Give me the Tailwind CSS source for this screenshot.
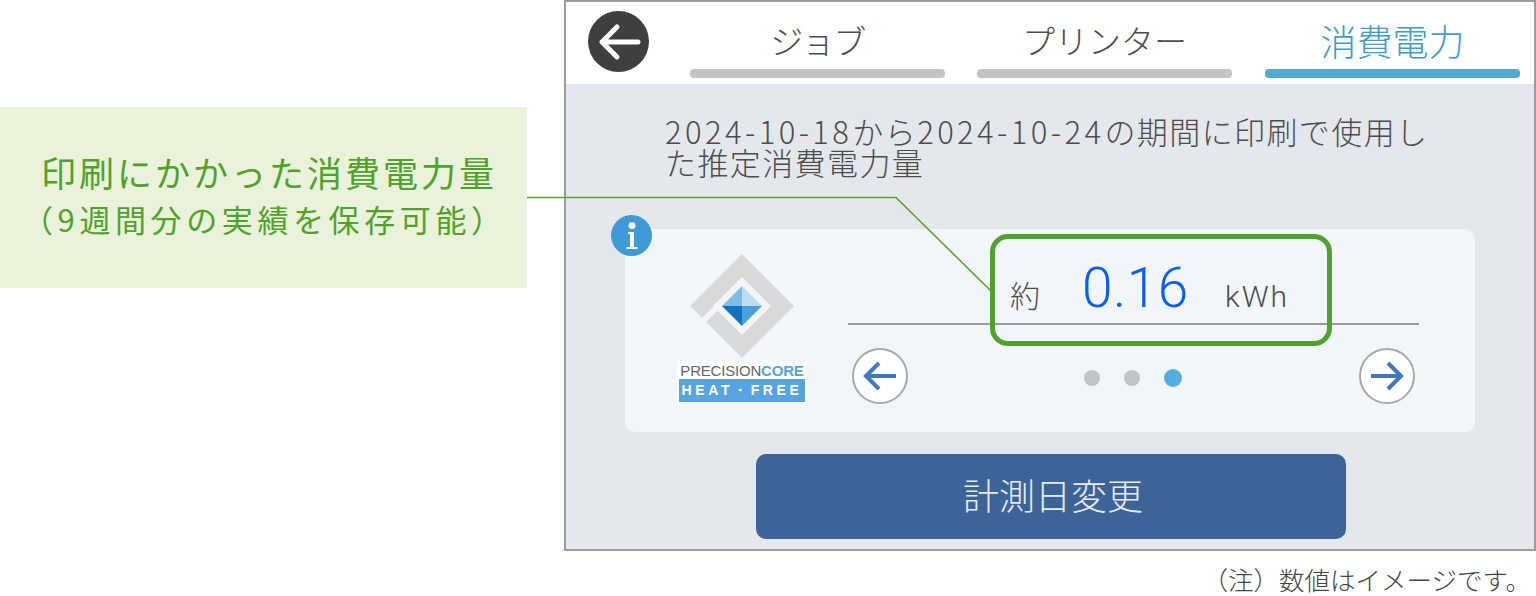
<!DOCTYPE html>
<html lang="ja">
<head>
    <meta charset="UTF-8">
    <title>消費電力</title>
    <script src="https://cdn.jsdelivr.net/npm/@tailwindcss/browser@4"></script>
</head>
<body class="bg-white">

<div class="relative w-[1536px] h-[596px] overflow-hidden flex font-['Noto_Sans_CJK_JP','Noto_Sans',sans-serif]">

    <!-- Callout -->
    <div class="w-[564px] shrink-0 pt-[107px]">
        <div class="w-[527px] h-[181px] bg-[#eaf2dc] pl-[41px] pt-[40px] text-[#4fa32a]">
            <p class="text-[35px] leading-[50px] tracking-[3px] whitespace-nowrap">印刷にかかった消費電力量</p>
            <p class="-ml-[19px] text-[31px] leading-[44px] tracking-[4.6px] whitespace-nowrap">（9週間分の実績を保存可能）</p>
        </div>
    </div>

    <div class="w-[972px] shrink-0">
        <!-- Panel -->
        <div class="w-[972px] h-[551px] border-2 border-[#9c9c9c] flex flex-col">
            <div class="h-[82px] bg-white flex shrink-0">
                <div class="w-[124px] pl-[22px] pt-[9px] shrink-0">
                    <div class="w-[61px] h-[61px] rounded-full bg-[#3f3f3f] flex items-center justify-center">
                        <svg width="44" height="44" viewBox="0 0 44 44" fill="none" stroke="#fff" stroke-width="5" stroke-linecap="round" stroke-linejoin="round"><path d="M41 22H5M20 7L5 22l15 15"/></svg>
                    </div>
                </div>
                <div class="flex gap-[32px]">
                    <div class="w-[255px] flex flex-col items-center">
                        <span class="h-[67px] text-[33px] leading-[76px] tracking-[-1.5px] text-[#4d4d4d] font-light">ジョブ</span>
                        <div class="w-full h-[9px] rounded-sm bg-[#c4c4c4]"></div>
                    </div>
                    <div class="w-[255px] flex flex-col items-center">
                        <span class="h-[67px] text-[33px] leading-[76px] text-[#4d4d4d] font-light">プリンター</span>
                        <div class="w-full h-[9px] rounded-sm bg-[#c4c4c4]"></div>
                    </div>
                    <div class="w-[255px] ml-[1px] flex flex-col items-center">
                        <span class="h-[67px] text-[36px] leading-[76px] text-[#3f9bcf] font-light">消費電力</span>
                        <div class="w-full h-[9px] rounded-sm bg-[#52a9d2]"></div>
                    </div>
                </div>
            </div>

            <div class="flex-1 bg-[#e4e8ed] pl-[59px] pr-[59px]">
                <p class="pl-[40px] pt-[31px] h-[145px] text-[31px] leading-[31px] text-[#4d4d4d] font-light tracking-[1.4px] whitespace-nowrap"><span class="tracking-[3.4px]">2024-10-18</span>から<span class="tracking-[3.4px]">2024-10-24</span>の期間に印刷で使用し<br>た推定消費電力量</p>

                <!-- Card -->
                <div class="relative w-[850px] h-[203px] bg-[#f2f6fb] rounded-[10px] flex">
                    <div class="absolute -left-[14px] -top-[14px] w-[41px] h-[41px] rounded-full bg-[#3f9ad8] flex items-center justify-center">
                        <svg width="14" height="28" viewBox="0 0 14 28" fill="#fff"><circle cx="7" cy="3.500" r="3.500"/><path d="M3 10h6v15h3.500v2H1.500v-2H5V12H3z"/></svg>
                    </div>

                    <!-- Logo -->
                    <div class="w-[223px] shrink-0 flex flex-col items-center pt-[24px] pl-[11px]">
                        <svg width="106" height="106" viewBox="0 0 106 106">
                            <path fill-rule="evenodd" fill="#d9d9d9" d="M53 1l52 52-52 52L1 53zM53 24L24 53l29 29 29-29z"/>
                            <path d="M8 74L33 49" stroke="#f2f6fb" stroke-width="6"/>
                            <path fill="#7fbde8" d="M53 33v20H33z"/>
                            <path fill="#bcdcf3" d="M53 33v20h20z"/>
                            <path fill="#0f73c0" d="M53 73V53H33z"/>
                            <path fill="#4c9fdc" d="M53 73V53h20z"/>
                        </svg>
                        <div class="w-[130px] h-[42px] mt-[2px] bg-white px-[2px] pt-[2px] font-['Liberation_Sans',sans-serif]">
                            <p class="h-[16px] text-[15px] leading-[16px] text-center whitespace-nowrap tracking-[-0.2px] text-[#666]">PRECISION<span class="text-[#56a5e0] font-bold">CORE</span></p>
                            <p class="h-[23px] bg-[#56a5e0] text-white text-[14px] leading-[23px] font-bold tracking-[3.600px] text-center whitespace-nowrap">HEAT・FREE</p>
                        </div>
                    </div>

                    <!-- Reading -->
                    <div class="w-[571px] shrink-0 flex flex-col">
                        <div class="h-[96px] pt-[22px] border-b-2 border-[#9c9c9c] flex items-baseline pl-[162px] whitespace-nowrap">
                            <span class="w-[72px] text-[30px] leading-[74px] text-[#4d4d4d] font-light">約</span>
                            <span class="w-[143px] text-[55px] leading-[74px] tracking-[0.5px] text-[#0a5cff] font-['Roboto',sans-serif] font-light">0.16</span>
                            <span class="text-[30px] leading-[74px] text-[#4d4d4d] font-['Roboto',sans-serif] font-light tracking-[2px]">kWh</span>
                        </div>
                        <div class="flex-1 flex items-start justify-between pl-[4px] pr-[4px] pt-[23px]">
                            <div class="w-[56px] h-[56px] rounded-full bg-white border-2 border-[#a8a8a8] flex items-center justify-center">
                                <svg width="34" height="30" viewBox="0 0 34 30" fill="none" stroke="#3f78bd" stroke-width="4"><path d="M33 15H3M16 2L3 15l13 13"/></svg>
                            </div>
                            <div class="flex items-center gap-[24px] pt-[21px] mr-[2px]">
                                <div class="w-[16px] h-[16px] rounded-full bg-[#c4c4c4]"></div>
                                <div class="w-[16px] h-[16px] rounded-full bg-[#c4c4c4]"></div>
                                <div class="w-[18px] h-[18px] rounded-full bg-[#52aee0]"></div>
                            </div>
                            <div class="w-[56px] h-[56px] rounded-full bg-white border-2 border-[#a8a8a8] flex items-center justify-center">
                                <svg width="34" height="30" viewBox="0 0 34 30" fill="none" stroke="#3f78bd" stroke-width="4"><path d="M1 15h30M18 2l13 13-13 13"/></svg>
                            </div>
                        </div>
                    </div>
                </div>

                <div class="w-[590px] h-[85px] mt-[22px] ml-[131px] pb-[6px] pl-[4px] rounded-[10px] bg-[#3d6499] flex items-center justify-center text-[36px] text-[#e8edf3] font-light">計測日変更</div>
            </div>
        </div>

        <p class="text-right pr-[5px] pt-[10px] text-[25.5px] leading-[36px] text-[#444] font-light whitespace-nowrap">（注）数値はイメージです。</p>
    </div>

    <!-- Leader line and highlight -->
    <svg class="absolute left-0 top-0 pointer-events-none" width="1536" height="596" fill="none" stroke="#4fa32a">
        <path stroke-width="1.5" d="M527 197.500H896L992 292"/>
    </svg>
    <div class="absolute left-[990px] top-[234px] w-[342px] h-[112px] border-[5px] border-[#4fa32a] rounded-[18px]"></div>
</div>

</body>
</html>
